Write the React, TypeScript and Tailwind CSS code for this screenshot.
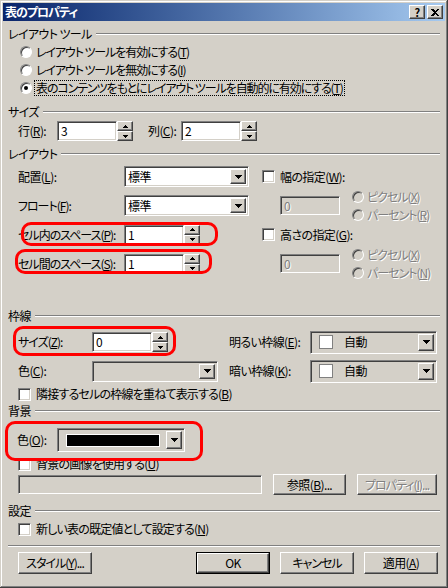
import type { ReactNode } from "react";

const sunken =
  "border border-t-[#808080] border-l-[#808080] border-b-white border-r-white shadow-[inset_1px_1px_#404040,inset_-1px_-1px_#d4d0c8]";
const raised =
  "bg-[#d4d0c8] border border-t-white border-l-white border-b-[#404040] border-r-[#404040] shadow-[inset_-1px_-1px_#808080]";
const disabledText = "text-[#808080] [text-shadow:1px_1px_0_#fff]";
const red = "absolute border-[3px] border-[#ff0000] rounded-[10px] pointer-events-none";

function Down() {
  return (
    <svg width="7" height="4" viewBox="0 0 7 4" shapeRendering="crispEdges">
      <path d="M0 0h7L3.5 4z" fill="#000" />
    </svg>
  );
}

function SpinArrow({ up }: { up?: boolean }) {
  return (
    <svg width="5" height="3" viewBox="0 0 5 3" shapeRendering="crispEdges">
      <path d={up ? "M2.5 0L5 3H0z" : "M0 0h5L2.5 3z"} fill="#000" />
    </svg>
  );
}

function SpinInput({ value }: { value: string }) {
  return (
    <div className="flex h-[20px]">
      <div className={`${sunken} w-[60px] bg-white flex items-center pl-[3px]`}>{value}</div>
      <div className="flex flex-col w-[16px]">
        <div className={`${raised} flex-1 flex items-center justify-center`}>
          <SpinArrow up />
        </div>
        <div className={`${raised} flex-1 flex items-center justify-center`}>
          <SpinArrow />
        </div>
      </div>
    </div>
  );
}

function Dropdown({ className = "", children }: { className?: string; children?: ReactNode }) {
  return (
    <div className={`${sunken} flex items-stretch p-[2px] ${className}`}>
      <div className="flex-1 flex items-center min-w-0">{children}</div>
      <div className={`${raised} w-[16px] flex items-center justify-center`}>
        <Down />
      </div>
    </div>
  );
}

function Radio({ checked, disabled }: { checked?: boolean; disabled?: boolean }) {
  return (
    <div
      className={`w-[12px] h-[12px] shrink-0 rounded-full border border-t-[#808080] border-l-[#808080] border-b-white border-r-white shadow-[inset_1px_1px_#404040] flex items-center justify-center ${
        disabled ? "bg-[#d4d0c8]" : "bg-white"
      }`}
    >
      {checked && <div className="w-[4px] h-[4px] rounded-full bg-black" />}
    </div>
  );
}

function Check() {
  return <div className={`${sunken} w-[13px] h-[13px] bg-white shrink-0`} />;
}

function Group({ title, className = "" }: { title: string; className?: string }) {
  return (
    <div className={`flex items-center h-[16px] ${className}`}>
      <span>{title}</span>
      <div className="flex-1 ml-[4px] border-t border-t-[#808080] border-b border-b-white" />
    </div>
  );
}

function RadioRow({ children, checked, focus }: { children: ReactNode; checked?: boolean; focus?: boolean }) {
  return (
    <div className="flex items-center h-[18px] pl-[12px]">
      <Radio checked={checked} />
      <span
        className={`ml-[2px] px-[1px] tracking-[-1.1px] ${
          focus ? "border border-dotted border-black" : "border border-transparent"
        }`}
      >
        {children}
      </span>
    </div>
  );
}

function CheckRow({ children, className = "" }: { children: ReactNode; className?: string }) {
  return (
    <div className={`flex items-center h-[16px] pl-[10px] ${className}`}>
      <Check />
      <span className="ml-[5px] tracking-[-0.8px]">{children}</span>
    </div>
  );
}

function UnitRadios({ last }: { last: ReactNode }) {
  return (
    <div className={`flex flex-col ml-[12px] tracking-[-1px] ${disabledText}`}>
      <div className="flex items-center h-[18px]">
        <Radio disabled />
        <span className="ml-[3px]">
          ピクセル(<u>X</u>)
        </span>
      </div>
      <div className="flex items-center h-[18px]">
        <Radio disabled />
        <span className="ml-[3px]">{last}</span>
      </div>
    </div>
  );
}

function DisabledBox() {
  return (
    <div className={`${sunken} w-[60px] h-[19px] bg-[#d4d0c8] flex items-center pl-[3px] ${disabledText}`}>0</div>
  );
}

function Button({ children, className = "", disabled }: { children: ReactNode; className?: string; disabled?: boolean }) {
  return (
    <div className={`${raised} flex items-center justify-center ${disabled ? disabledText : ""} ${className}`}>
      {children}
    </div>
  );
}

function ColorSwatch() {
  return (
    <div className="flex items-center pl-[6px] gap-[11px]">
      <div className="w-[14px] h-[14px] bg-white border border-[#808080]" />
      <span>自動</span>
    </div>
  );
}

export default function App() {
  return (
    <div className="w-[448px] h-[588px] bg-[#d4d0c8] [font-family:'Noto_Sans_CJK_JP','Noto_Sans',sans-serif] [font-feature-settings:'palt'] text-[12px] leading-[14px] tracking-[-0.6px] whitespace-nowrap text-black">
      <div className="w-full h-full p-[3px] flex flex-col shadow-[inset_-1px_-1px_#404040,inset_1px_1px_#d4d0c8,inset_-2px_-2px_#808080,inset_2px_2px_#ffffff]">
        {/* title bar */}
        <div className="h-[18px] flex items-center bg-linear-to-r from-[#0a246a] to-[#a6caf0] pl-[2px] pr-[2px]">
          <span className="text-white font-bold text-[12px] tracking-[-1px]">表のプロパティ</span>
          <div className="ml-auto flex gap-[2px]">
            <div className={`${raised} w-[16px] h-[14px] flex items-center justify-center text-[11px] font-bold leading-none`}>
              ?
            </div>
            <div className={`${raised} w-[16px] h-[14px] flex items-center justify-center`}>
              <svg width="8" height="7" viewBox="0 0 8 7" shapeRendering="crispEdges">
                <path d="M0 0h2l2 2 2-2h2L5 3.5 8 7H6L4 5 2 7H0l3-3.5z" fill="#000" />
              </svg>
            </div>
          </div>
        </div>

        <div className="flex flex-col px-[5px]">
          <Group title="レイアウト ツール" className="mt-[5px]" />
          <div className="mt-[1px]">
            <RadioRow>
              レイアウト ツールを有効にする(<u>T</u>)
            </RadioRow>
            <RadioRow>
              レイアウト ツールを無効にする(<u>I</u>)
            </RadioRow>
            <RadioRow checked focus>
              表のコンテンツをもとにレイアウト ツールを自動的に有効にする(<u>T</u>)
            </RadioRow>
          </div>

          <Group title="サイズ" className="mt-[7px]" />
          <div className="flex items-center h-[20px] mt-[1px] pl-[10px]">
            <span className="w-[39px]">
              行(<u>R</u>):
            </span>
            <SpinInput value="3" />
            <span className="ml-[15px] w-[33px]">
              列(<u>C</u>):
            </span>
            <SpinInput value="2" />
          </div>

          <Group title="レイアウト" className="mt-[5px]" />
          <div className="flex flex-col">
            <div className="flex items-center h-[29px]">
              <div className="flex items-center w-[254px] pl-[10px]">
                <span className="w-[106px]">
                  配置(<u>L</u>):
                </span>
                <Dropdown className="w-[125px] h-[21px] bg-white">
                  <span className="pl-[1px]">標準</span>
                </Dropdown>
              </div>
              <Check />
              <span className="ml-[5px]">
                幅の指定(<u>W</u>):
              </span>
            </div>
            <div className="flex items-center h-[29px]">
              <div className="flex items-center w-[254px] pl-[10px]">
                <span className="w-[106px] tracking-[-1px]">
                  フロート(<u>F</u>):
                </span>
                <Dropdown className="w-[125px] h-[21px] bg-white">
                  <span className="pl-[1px]">標準</span>
                </Dropdown>
              </div>
              <div className="pl-[18px] flex items-center">
                <DisabledBox />
                <UnitRadios
                  last={
                    <>
                      パーセント(<u>R</u>)
                    </>
                  }
                />
              </div>
            </div>
            <div className="relative flex items-center h-[29px]">
              <div className="flex items-center w-[254px] pl-[10px]">
                <span className="w-[106px] tracking-[-1px]">
                  セル内のスペース(<u>P</u>):
                </span>
                <SpinInput value="1" />
              </div>
              <Check />
              <span className="ml-[5px]">
                高さの指定(<u>G</u>):
              </span>
              <div className={`${red} left-[13px] top-[2px] w-[197px] h-[24px]`} />
            </div>
            <div className="relative flex items-center h-[29px]">
              <div className="flex items-center w-[254px] pl-[10px]">
                <span className="w-[106px] tracking-[-1px]">
                  セル間のスペース(<u>S</u>):
                </span>
                <SpinInput value="1" />
              </div>
              <div className="pl-[18px] flex items-center">
                <DisabledBox />
                <UnitRadios
                  last={
                    <>
                      パーセント(<u>N</u>)
                    </>
                  }
                />
              </div>
              <div className={`${red} left-[7px] top-0 w-[197px] h-[25px]`} />
            </div>
          </div>

          <Group title="枠線" className="mt-[30px]" />
          <div className="relative flex items-center h-[24px] mt-[6px] pl-[10px]">
            <span className="w-[74px] tracking-[-1px]">
              サイズ(<u>Z</u>):
            </span>
            <SpinInput value="0" />
            <span className="ml-[61px] w-[81px]">
              明るい枠線(<u>E</u>):
            </span>
            <Dropdown className="w-[127px] h-[23px] bg-[#d4d0c8]">
              <ColorSwatch />
            </Dropdown>
            <div className={`${red} left-[5px] -top-[4px] w-[163px] h-[30px]`} />
          </div>
          <div className="flex items-center h-[24px] mt-[5px] pl-[10px]">
            <span className="w-[74px]">
              色(<u>C</u>):
            </span>
            <Dropdown className="w-[126px] h-[21px] bg-[#d4d0c8]" />
            <span className="ml-[11px] w-[81px]">
              暗い枠線(<u>K</u>):
            </span>
            <Dropdown className="w-[127px] h-[23px] bg-[#d4d0c8]">
              <ColorSwatch />
            </Dropdown>
          </div>
          <CheckRow className="mt-[3px]">
            隣接するセルの枠線を重ねて表示する(<u>B</u>)
          </CheckRow>

          <Group title="背景" className="mt-[1px]" />
          <div className="relative flex items-center h-[24px] mt-[9px] pl-[9px]">
            <span className="w-[40px]">
              色(<u>O</u>):
            </span>
            <Dropdown className="w-[128px] h-[24px] bg-[#d4d0c8]">
              <div className="w-full h-full pl-[6px] pr-[6px] pt-[3px] pb-[2px]">
                <div className="w-full h-full bg-black border border-white" />
              </div>
            </Dropdown>
            <div className={`${red} -left-[3px] -top-[7px] w-[198px] h-[40px]`} />
          </div>
          <CheckRow className="mt-[4px]">
            背景の画像を使用する(<u>U</u>)
          </CheckRow>
          <div className="flex items-center h-[21px] mt-[2px] pl-[10px]">
            <div className={`${sunken} w-[244px] h-[19px] bg-[#d4d0c8]`} />
            <Button className="ml-[11px] w-[73px] h-[21px]">
              参照(<u>B</u>)...
            </Button>
            <Button className="ml-[11px] w-[80px] h-[21px] tracking-[-1px]" disabled>
              プロパティ(<u>I</u>)...
            </Button>
          </div>

          <Group title="設定" className="mt-[8px]" />
          <CheckRow className="mt-[2px]">
            新しい表の既定値として設定する(<u>N</u>)
          </CheckRow>
          <div className="mt-[8px] border-t border-t-[#808080] border-b border-b-white" />
          <div className="flex items-center h-[22px] mt-[5px] pl-[10px]">
            <Button className="w-[74px] h-[22px] tracking-[-1px]">
              スタイル(<u>Y</u>)...
            </Button>
            <div className="ml-[104px] w-[74px] h-[22px] border border-black">
              <Button className="w-full h-full">OK</Button>
            </div>
            <Button className="ml-[10px] w-[74px] h-[22px] tracking-[-1px]">キャンセル</Button>
            <Button className="ml-[10px] w-[74px] h-[22px]">
              適用(<u>A</u>)
            </Button>
          </div>
        </div>
      </div>
    </div>
  );
}
